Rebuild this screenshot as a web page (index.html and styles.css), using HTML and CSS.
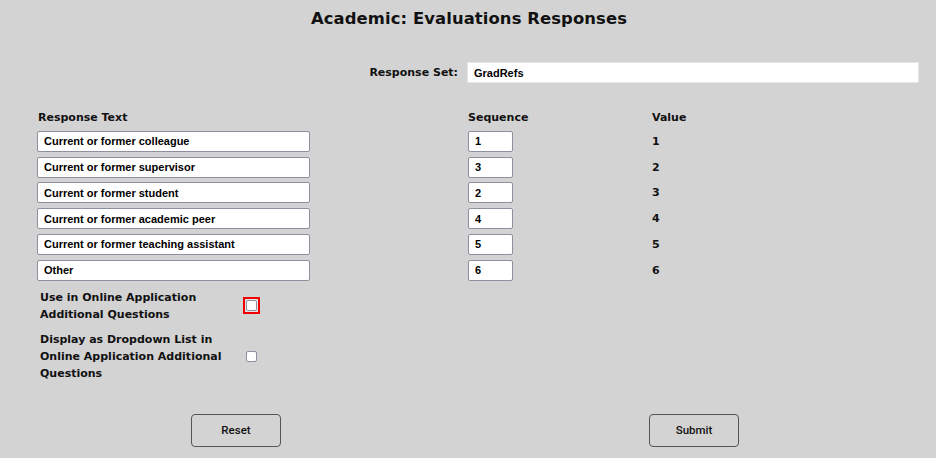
FILE: index.html
```html
<!DOCTYPE html>
<html lang="en">
<head>
    <meta charset="utf-8">
    <title>Academic: Evaluations Responses</title>
    <link rel="stylesheet" href="styles.css">
</head>
<body>
    <main class="page">
        <h1 class="page-title">Academic: Evaluations Responses</h1>

        <div class="set-row">
            <label class="set-label" for="responseSet">Response Set:</label>
            <input class="field set-field" id="responseSet" type="text" value="GradRefs">
        </div>

        <div class="responses">
            <div class="col-head">Response Text</div>
            <div class="col-head">Sequence</div>
            <div class="col-head">Value</div>

            <input class="field text-field" type="text" value="Current or former colleague">
            <input class="field seq-field" type="text" value="1">
            <div class="value">1</div>

            <input class="field text-field" type="text" value="Current or former supervisor">
            <input class="field seq-field" type="text" value="3">
            <div class="value">2</div>

            <input class="field text-field" type="text" value="Current or former student">
            <input class="field seq-field" type="text" value="2">
            <div class="value">3</div>

            <input class="field text-field" type="text" value="Current or former academic peer">
            <input class="field seq-field" type="text" value="4">
            <div class="value">4</div>

            <input class="field text-field" type="text" value="Current or former teaching assistant">
            <input class="field seq-field" type="text" value="5">
            <div class="value">5</div>

            <input class="field text-field" type="text" value="Other">
            <input class="field seq-field" type="text" value="6">
            <div class="value">6</div>
        </div>

        <div class="options">
            <label class="option-label" for="useOnline">Use in Online Application Additional Questions</label>
            <span class="check-wrap focused"><input class="check" id="useOnline" type="checkbox"></span>

            <label class="option-label" for="dropdown">Display as Dropdown List in Online Application Additional Questions</label>
            <span class="check-wrap"><input class="check" id="dropdown" type="checkbox"></span>
        </div>

        <div class="actions">
            <button class="btn" type="reset">Reset</button>
            <button class="btn" type="submit">Submit</button>
        </div>
    </main>
</body>
</html>
```

FILE: styles.css
```css
:root {
    --bg: #d3d3d3;
    --text: #111;
    --field-border: #8f8f9d;
    --label-font: "DejaVu Sans", "Noto Sans", sans-serif;
    --field-font: "Liberation Sans", Arial, sans-serif;
}

* {
    margin: 0;
    padding: 0;
    box-sizing: border-box;
}

body {
    background: var(--bg);
    color: var(--text);
    font-family: var(--label-font);
    width: 936px;
    height: 458px;
    overflow: hidden;
}

.page {
    padding-top: 8px;
}

.page-title {
    text-align: center;
    font-size: 16.4px;
    font-weight: 700;
    line-height: 22px;
    letter-spacing: 0.1px;
    margin-left: 2px;
}

.field {
    display: block;
    height: 21px;
    background: #fff;
    border: 1px solid var(--field-border);
    border-radius: 2px;
    font-family: var(--field-font);
    font-size: 11px;
    font-weight: 700;
    color: #000;
    padding: 0 6px;
    outline: none;
}

.set-row {
    display: flex;
    justify-content: flex-end;
    align-items: center;
    margin-top: 32px;
    padding-right: 17px;
    gap: 9px;
}

.set-label {
    font-size: 11px;
    font-weight: 700;
}

.set-field {
    width: 452px;
    border-color: #e6e6e6;
    border-radius: 0;
}

.responses {
    display: grid;
    grid-template-columns: 431px 184px 1fr;
    row-gap: 4.8px;
    align-items: center;
    margin-top: 28px;
    padding-left: 37px;
}

.col-head {
    font-size: 11px;
    font-weight: 700;
    line-height: 14px;
    margin-bottom: 1px;
}

.col-head:first-child {
    padding-left: 1px;
}

.text-field {
    width: 273px;
}

.seq-field {
    width: 45px;
}

.value {
    font-size: 11px;
    font-weight: 700;
}

.options {
    display: grid;
    grid-template-columns: 203px auto;
    row-gap: 8px;
    align-items: center;
    margin-top: 8px;
    padding-left: 40px;
}

.option-label {
    width: 192px;
    font-size: 11px;
    font-weight: 700;
    line-height: 17px;
}

.check-wrap {
    display: inline-flex;
    width: 17px;
    height: 17px;
    align-items: center;
    justify-content: center;
}

.check-wrap.focused {
    border: 2px solid #f00000;
}

.check {
    appearance: none;
    width: 11px;
    height: 11px;
    background: #fff;
    border: 1px solid #8f8f9d;
    border-radius: 2px;
}

.focused .check {
    box-shadow: 0 0 0 1px #e6e6e6;
}

.actions {
    display: flex;
    gap: 368px;
    margin-top: 32px;
    padding-left: 191px;
}

.btn {
    width: 90px;
    height: 33px;
    background: var(--bg);
    border: 1px solid #555;
    border-radius: 4px;
    font-family: "Roboto", var(--field-font);
    font-size: 11.5px;
    font-weight: 500;
    color: #111;
}
```
